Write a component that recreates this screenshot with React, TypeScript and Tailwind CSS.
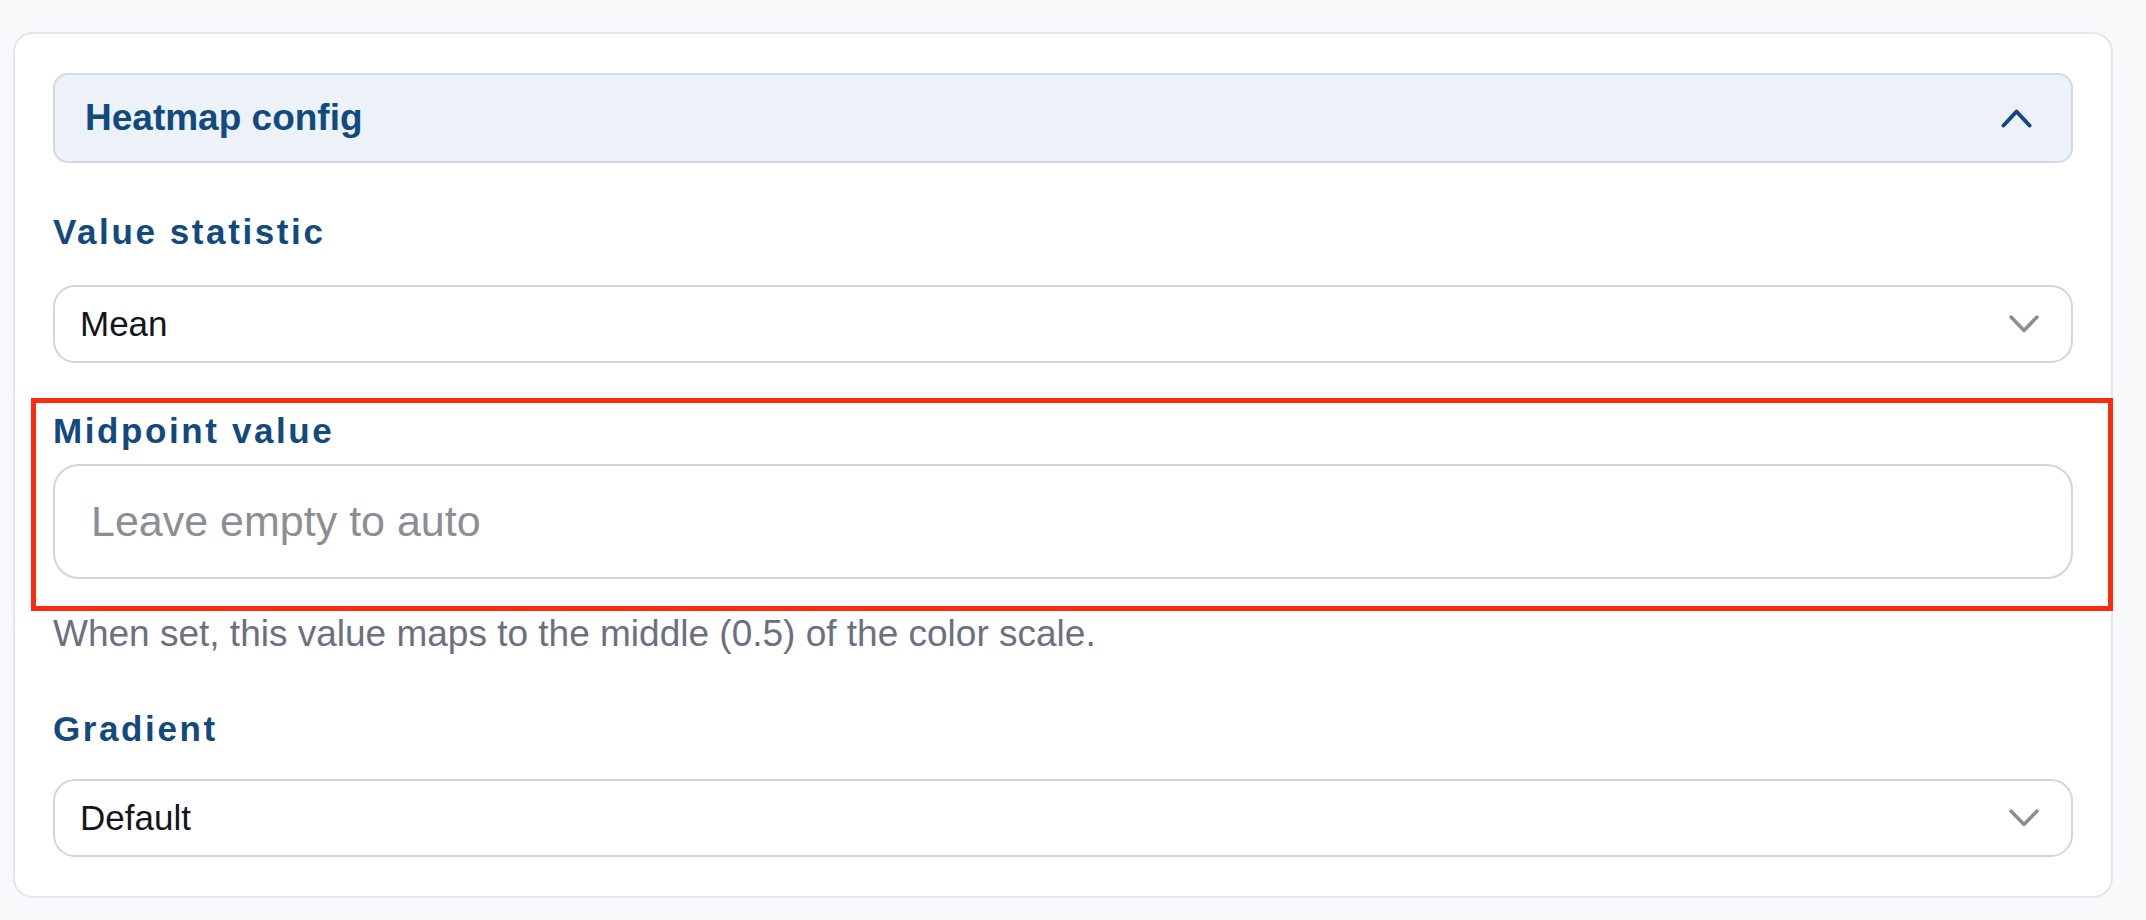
import React from "react";

const font = { fontFamily: '"Liberation Sans", Arial, Helvetica, sans-serif' };

function ChevronDown() {
  return (
    <svg width="30" height="18" viewBox="0 0 30 18" fill="none">
      <polyline points="2,2 15,15.5 28,2" stroke="#8a8d92" strokeWidth="3.5" strokeLinecap="round" strokeLinejoin="round" />
    </svg>
  );
}

function ChevronUp() {
  return (
    <svg width="31" height="19" viewBox="0 0 31 19" fill="none">
      <polyline points="2.5,16.5 15.5,2.5 28.5,16.5" stroke="#124a7e" strokeWidth="4" strokeLinecap="round" strokeLinejoin="round" />
    </svg>
  );
}

function Label({ children, className = "" }: { children: React.ReactNode; className?: string }) {
  return (
    <div className={`text-[35px] leading-[40px] font-bold tracking-[2.6px] text-[#124a7e] ${className}`}>{children}</div>
  );
}

function SelectBox({ value, className = "" }: { value: string; className?: string }) {
  return (
    <div
      className={`h-[78px] border-2 border-[#d3d5d9] rounded-[22px] bg-white flex items-center justify-between pl-[25px] pr-[32px] ${className}`}
    >
      <span className="text-[35px] leading-[40px] text-[#14151a]">{value}</span>
      <ChevronDown />
    </div>
  );
}

export default function App() {
  return (
    <div className="relative w-[2146px] h-[920px] bg-[#f7f9fb] overflow-hidden" style={font}>
      <div className="pt-[32px] pl-[13px]">
        <div className="w-[2100px] h-[866px] bg-white border-2 border-[#e3e6ea] rounded-[20px] pt-[39px] px-[38px] pb-[39px] flex flex-col">
          <div className="h-[90px] bg-[#ecf2f8] border-2 border-[#d0dae6] rounded-[15px] flex items-center justify-between pl-[30px] pr-[39px]">
            <span className="text-[37px] leading-[44px] font-bold text-[#124a7e]">Heatmap config</span>
            <ChevronUp />
          </div>

          <Label className="mt-[49px]">Value statistic</Label>
          <SelectBox value="Mean" className="mt-[33px]" />

          <Label className="mt-[48px]">Midpoint value</Label>
          <input
            type="text"
            placeholder="Leave empty to auto"
            className="mt-[13px] h-[115px] w-full border-2 border-[#d3d5d9] rounded-[26px] bg-white pl-[36px] text-[43px] leading-[50px] text-[#14151a] placeholder:text-[#8b8e94] outline-none"
            style={font}
          />
          <div className="mt-[33px] text-[37px] leading-[44px] text-[#6b7080]">
            When set, this value maps to the middle (0.5) of the color scale.
          </div>

          <Label className="mt-[53px]">Gradient</Label>
          <SelectBox value="Default" className="mt-[30px]" />
        </div>
      </div>

      <div className="absolute left-[31px] top-[398px] w-[2082px] h-[213px] border-[5px] border-[#fb2c0c] pointer-events-none" />
    </div>
  );
}
